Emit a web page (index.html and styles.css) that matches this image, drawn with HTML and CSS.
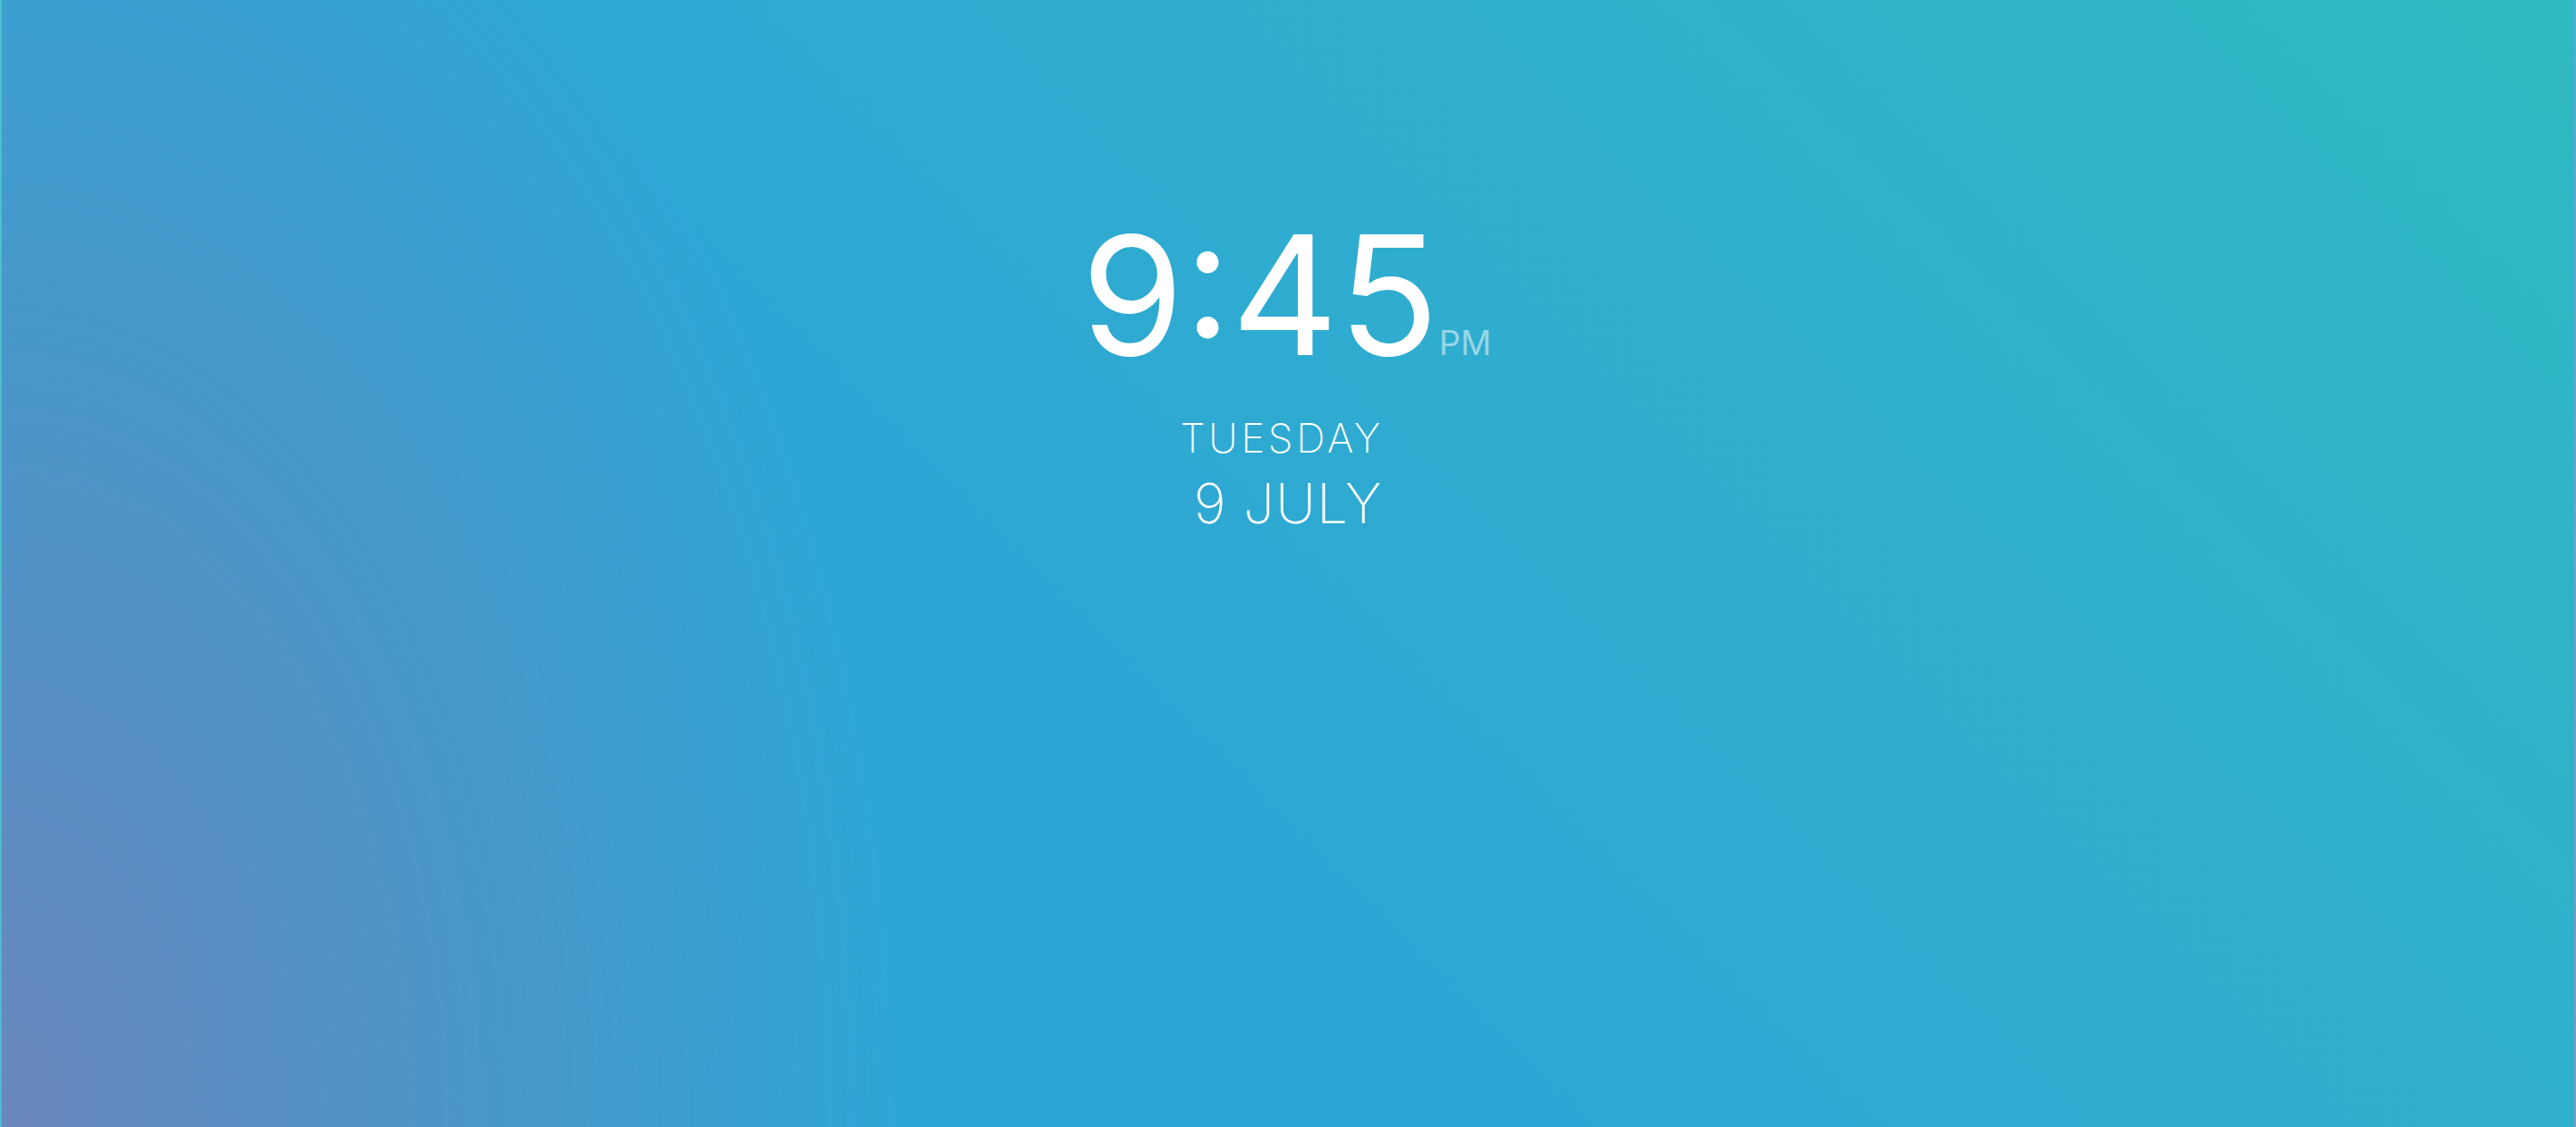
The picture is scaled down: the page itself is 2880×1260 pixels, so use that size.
FILE: index.html
```html
<!DOCTYPE html>
<html lang="en">
<head>
<meta charset="utf-8">
<title>Clock</title>
<link rel="stylesheet" href="styles.css">
</head>
<body>
<main class="screen">
  <div class="clock">
    <span class="time">9:45</span><span class="ampm">PM</span>
  </div>
  <div class="date">
    <div class="weekday">TUESDAY</div>
    <div class="day">9 JULY</div>
  </div>
</main>
</body>
</html>
```

FILE: styles.css
```css
html, body {
  margin: 0;
  padding: 0;
  height: 100%;
}
body {
  font-family: Inter, "Open Sans", "Liberation Sans", sans-serif;
  color: #fff;
}
.screen {
  box-sizing: border-box;
  height: 1260px;
  display: flex;
  flex-direction: column;
  align-items: center;
  padding-top: 238px;
  border-left: 2px solid rgba(255,255,255,0.14);
  border-right: 2px solid rgba(255,255,255,0.14);
  background:
    radial-gradient(1000px 1600px at 0 100%, rgba(106,134,188,1) 0%, rgba(106,134,188,0) 100%),
    linear-gradient(45deg, #2ea6d5 0%, #2ea6d5 42%, #2fb0cc 70%, #2fb9c1 100%);
}
.clock {
  display: flex;
  align-items: baseline;
  line-height: 1;
  margin-left: -4px;
}
.time {
  font-size: 185px;
  font-weight: 400;
  letter-spacing: 0;
}
.ampm {
  font-size: 38px;
  font-weight: 400;
  color: rgba(255,255,255,0.5);
  margin-left: 0;
}
.date {
  display: flex;
  flex-direction: column;
  align-items: center;
  margin-top: 44px;
  font-weight: 200;
  line-height: 1;
}
.weekday {
  font-size: 45px;
  letter-spacing: 3.6px;
  margin-right: 14px;
}
.day {
  font-size: 62px;
  letter-spacing: 1px;
  margin-top: 20px;
}
```
